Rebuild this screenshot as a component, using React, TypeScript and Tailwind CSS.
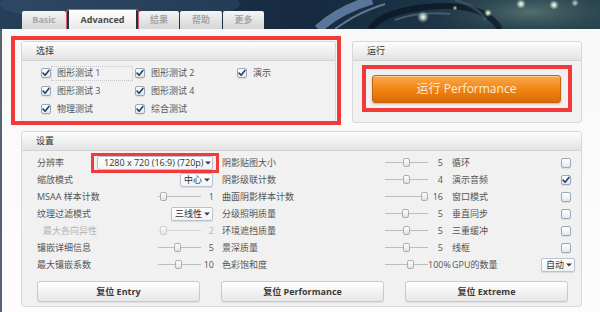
import React from "react";

const FONT = "font-['Open_Sans','Noto_Sans_CJK_SC',sans-serif]";

function Arrow() {
  return (
    <svg width="6" height="4" viewBox="0 0 6 4" className="shrink-0">
      <path d="M0 0.5 L6 0.5 L3 3.5 Z" fill="#3a3a3a" />
    </svg>
  );
}

function Drop({ text, className = "" }: { text: string; className?: string }) {
  return (
    <div
      className={`h-[14px] pl-[3px] pr-[2px] flex items-center justify-between gap-[2px] bg-gradient-to-b from-white to-[#f1f3f6] border border-[#b7c2cf] rounded-[2px] shadow-[0_1px_1px_rgba(0,0,0,0.10)] text-[9px] leading-none text-[#333] whitespace-nowrap ${className}`}
    >
      <span>{text}</span>
      <Arrow />
    </div>
  );
}

function Check({ checked }: { checked: boolean }) {
  return (
    <span className="w-[10px] h-[10px] shrink-0 rounded-[2px] border border-[#99a7b8] bg-gradient-to-b from-white to-[#e3e8ef] flex items-center justify-center shadow-[0_1px_1px_rgba(0,0,0,0.08)]">
      {checked && (
        <svg width="8" height="8" viewBox="0 0 8 8">
          <path d="M1.1 4.1 L3.1 6.2 L6.9 1.4" stroke="#26416a" strokeWidth="1.6" fill="none" strokeLinecap="round" strokeLinejoin="round" />
        </svg>
      )}
    </span>
  );
}

function Slider({ pos, disabled = false }: { pos: number; disabled?: boolean }) {
  return (
    <div className="relative w-[43px] h-[9px] shrink-0">
      <div className={`absolute left-0 right-0 top-[4px] h-[1px] ${disabled ? "bg-[#d6d6d6]" : "bg-[#bdbdbd]"}`} />
      <div
        className={`absolute top-0 w-[7px] h-[9px] rounded-[2px] border ${disabled ? "border-[#cfcfcf]" : "border-[#aeaeae]"} bg-gradient-to-b from-white to-[#e2e2e2]`}
        style={{ left: pos }}
      />
    </div>
  );
}

function Panel({ title, className = "", children }: { title: string; className?: string; children?: React.ReactNode }) {
  return (
    <div className={`rounded-[3px] border border-[#d8d8d8] bg-[#f1f1f1] overflow-hidden ${className}`}>
      <div className="h-[19px] border-b border-[#d3d3d3] bg-gradient-to-b from-[#fdfdfd] to-[#e3e3e3] pl-[14px] flex items-center text-[9px] text-[#333]">
        {title}
      </div>
      {children}
    </div>
  );
}

function Header() {
  const tabs = [
    { t: "Basic", w: "w-[44px]", active: false },
    { t: "Advanced", w: "w-[71px]", active: true },
    { t: "结果", w: "w-[40px]", active: false },
    { t: "帮助", w: "w-[42px]", active: false },
    { t: "更多", w: "w-[41px]", active: false },
  ];
  return (
    <div className="relative h-[29px] bg-gradient-to-r from-[#2a4460] via-[#172b42] to-[#2a4650] flex items-end pl-[22px] gap-[1px] overflow-hidden">
      <svg className="absolute inset-0" width="600" height="29" viewBox="0 0 600 29">
        <defs>
          <radialGradient id="glow" cx="50%" cy="50%" r="50%">
            <stop offset="0%" stopColor="#ffffff" stopOpacity="1" />
            <stop offset="40%" stopColor="#e8f7d8" stopOpacity="0.7" />
            <stop offset="100%" stopColor="#9ac0b0" stopOpacity="0" />
          </radialGradient>
          <radialGradient id="haze" cx="50%" cy="50%" r="50%">
            <stop offset="0%" stopColor="#7a9a90" stopOpacity="0.55" />
            <stop offset="100%" stopColor="#2a4650" stopOpacity="0" />
          </radialGradient>
        </defs>
        <rect x="0" y="0" width="600" height="29" fill="#0d1d30" opacity="0.12" />
        <ellipse cx="530" cy="12" rx="110" ry="30" fill="url(#haze)" />
        <ellipse cx="120" cy="4" rx="120" ry="18" fill="#3d5876" opacity="0.35" />
        <path d="M318 29 C330 18 345 8 372 0" stroke="#6f90b8" strokeWidth="9" fill="none" opacity="0.75" />
        <path d="M335 29 C348 20 360 12 385 4" stroke="#a8c2de" strokeWidth="2" fill="none" opacity="0.5" />
        <path d="M370 29 C380 16 400 8 440 6 C470 5 490 12 500 29" stroke="#0a1420" strokeWidth="6" fill="none" opacity="0.7" />
        <path d="M395 20 C410 14 430 12 450 14" stroke="#5e7690" strokeWidth="2" fill="none" opacity="0.6" />
        <path d="M455 0 C470 4 480 10 486 20" stroke="#4c6478" strokeWidth="3" fill="none" opacity="0.5" />
        <circle cx="423" cy="17" r="6" fill="url(#glow)" />
        <circle cx="488" cy="13" r="4" fill="url(#glow)" />
        <circle cx="521" cy="4" r="5" fill="url(#glow)" />
        <circle cx="554" cy="5" r="5" fill="url(#glow)" />
        <circle cx="575" cy="3" r="4" fill="url(#glow)" opacity="0.7" />
        <circle cx="455" cy="8" r="2.5" fill="url(#glow)" opacity="0.8" />
      </svg>
      {tabs.map((tab) =>
        tab.active ? (
          <div
            key={tab.t}
            className={`relative ${tab.w} h-[19px] rounded-t-[2px] border-x-2 border-[#1c3444] bg-gradient-to-b from-white to-[#e9e9e9] outline outline-1 outline-[#d65a6c] flex items-center justify-center text-[9px] font-bold text-[#4a4a4a]`}
          >
            {tab.t}
          </div>
        ) : (
          <div
            key={tab.t}
            className={`relative ${tab.w} h-[18px] rounded-t-[2px] bg-gradient-to-b from-[#f5f5f5] to-[#d5d5d5] flex items-center justify-center text-[9px] font-bold text-[#a6a6a6]`}
          >
            {tab.t}
          </div>
        )
      )}
    </div>
  );
}

export default function App() {
  const sel = [
    ["图形测试 1", "图形测试 2", "演示"],
    ["图形测试 3", "图形测试 4", ""],
    ["物理测试", "综合测试", ""],
  ];

  const col1: { label: string; kind: string; text?: string; pos?: number; val?: string; disabled?: boolean }[] = [
    { label: "分辨率", kind: "res" },
    { label: "缩放模式", kind: "drop", text: "中心" },
    { label: "MSAA 样本计数", kind: "slider", pos: 2, val: "1" },
    { label: "纹理过滤模式", kind: "drop", text: "三线性" },
    { label: "最大各向异性", kind: "slider", pos: 2, val: "2", disabled: true },
    { label: "镶嵌详细信息", kind: "slider", pos: 16, val: "5" },
    { label: "最大镶嵌系数", kind: "slider", pos: 17, val: "10" },
  ];

  const col2 = [
    { label: "阴影贴图大小", pos: 18, val: "5" },
    { label: "阴影级联计数", pos: 18, val: "4" },
    { label: "曲面阴影样本计数", pos: 36, val: "16" },
    { label: "分级照明质量", pos: 17, val: "5" },
    { label: "环境遮挡质量", pos: 18, val: "5" },
    { label: "景深质量", pos: 18, val: "5" },
    { label: "色彩饱和度", pos: 22, val: "100%" },
  ];

  const col3 = [
    { label: "循环", checked: false },
    { label: "演示音频", checked: true },
    { label: "窗口模式", checked: false },
    { label: "垂直同步", checked: false },
    { label: "三重缓冲", checked: false },
    { label: "线框", checked: false },
    { label: "GPU的数量", drop: true },
  ];

  return (
    <div className={`relative w-[600px] h-[312px] overflow-hidden bg-[#56636f] ${FONT} text-[#444]`}>
      <Header />
      <div className="ml-[2px] h-[283px] bg-gradient-to-b from-[#f8f8f8] to-[#fdfdfd] pt-[12px] pl-[19px]">
        <div className="flex w-[561px] gap-[16px]">
          <Panel title="选择" className="w-[315px] h-[82px]">
            <div className="pt-[3px] pl-[19px] grid grid-cols-[94px_102px_1fr]">
              {sel.map((row, r) =>
                row.map((item, c) => (
                  <div key={`${r}-${c}`} className="h-[18px] flex items-center">
                    {item && (
                      <>
                        <Check checked />
                        {r === 0 && c === 0 ? (
                          <span className="w-[82px] h-[15px] border border-dotted border-[#c6c6c6] pl-[5px] flex items-center text-[9px] text-[#555] whitespace-nowrap">
                            {item}
                          </span>
                        ) : (
                          <span className="pl-[6px] text-[9px] text-[#555] whitespace-nowrap">{item}</span>
                        )}
                      </>
                    )}
                  </div>
                ))
              )}
            </div>
          </Panel>
          <Panel title="运行" className="w-[230px] h-[82px]">
            <div className="pt-[14px] pl-[19px]">
              <button className="w-[189px] h-[28px] rounded-[3px] border border-[#c8640e] bg-gradient-to-b from-[#f8a84a] via-[#f2860f] to-[#d96a08] shadow-[0_1px_2px_rgba(120,60,0,0.35),inset_0_1px_0_rgba(255,230,190,0.6)] flex items-center justify-center text-[12px] text-[#fdebd8] whitespace-nowrap">
                运行 Performance
              </button>
            </div>
          </Panel>
        </div>

        <Panel title="设置" className="mt-[8px] w-[561px] h-[176px]">
          <div className="pt-[3px] pl-[15px] flex">
            <div className="w-[177px] flex flex-col">
              {col1.map((r) => (
                <div key={r.label} className="h-[17px] flex items-center">
                  <span
                    className={`flex-1 text-[9px] whitespace-nowrap ${r.disabled ? "text-[#b4b4b4] pl-[6px]" : "text-[#555]"}`}
                  >
                    {r.label}
                  </span>
                  {r.kind === "res" && <Drop text="1280 x 720 (16:9) (720p)" className="w-[116px] mr-[1px] pl-[6px]" />}
                  {r.kind === "drop" && <Drop text={r.text!} className="mr-[1px]" />}
                  {r.kind === "slider" && (
                    <>
                      <Slider pos={r.pos!} disabled={r.disabled} />
                      <span className={`w-[13px] text-right text-[9px] whitespace-nowrap ${r.disabled ? "text-[#b4b4b4]" : "text-[#555]"}`}>
                        {r.val}
                      </span>
                    </>
                  )}
                </div>
              ))}
            </div>
            <div className="ml-[7px] w-[222px] flex flex-col">
              {col2.map((r) => (
                <div key={r.label} className="h-[17px] flex items-center">
                  <span className="flex-1 pl-[1px] text-[9px] text-[#555] whitespace-nowrap">{r.label}</span>
                  <Slider pos={r.pos} />
                  <span className="w-[15px] text-right text-[9px] text-[#555] whitespace-nowrap">{r.val}</span>
                </div>
              ))}
            </div>
            <div className="ml-[9px] w-[123px] flex flex-col">
              {col3.map((r) => (
                <div key={r.label} className="h-[17px] flex items-center justify-between">
                  <span className="text-[9px] text-[#555] whitespace-nowrap">{r.label}</span>
                  {r.drop ? (
                    <Drop text="自动" className="w-[34px] pl-[4px]" />
                  ) : (
                    <span className="mr-[4px]">
                      <Check checked={!!r.checked} />
                    </span>
                  )}
                </div>
              ))}
            </div>
          </div>
          <div className="mt-[8px] pl-[15px] flex gap-[21px]">
            {["复位 Entry", "复位 Performance", "复位 Extreme"].map((b) => (
              <button
                key={b}
                className="w-[163px] h-[21px] rounded-[3px] border border-[#c9c9c9] bg-gradient-to-b from-white to-[#e7e7e7] shadow-[0_1px_1px_rgba(0,0,0,0.08)] flex items-center justify-center text-[9px] font-bold text-[#3a3a3a] whitespace-nowrap"
              >
                {b}
              </button>
            ))}
          </div>
        </Panel>
      </div>

      {/* red annotation boxes */}
      <div className="absolute left-[11px] top-[36px] w-[330px] h-[89px] border-[4px] border-[#f23a3a] pointer-events-none" />
      <div className="absolute left-[362px] top-[65px] w-[210px] h-[47px] border-[4px] border-[#f23a3a] pointer-events-none" />
      <div className="absolute left-[91px] top-[153px] w-[128px] h-[20px] border-[3px] border-[#f23a3a] pointer-events-none" />
    </div>
  );
}
